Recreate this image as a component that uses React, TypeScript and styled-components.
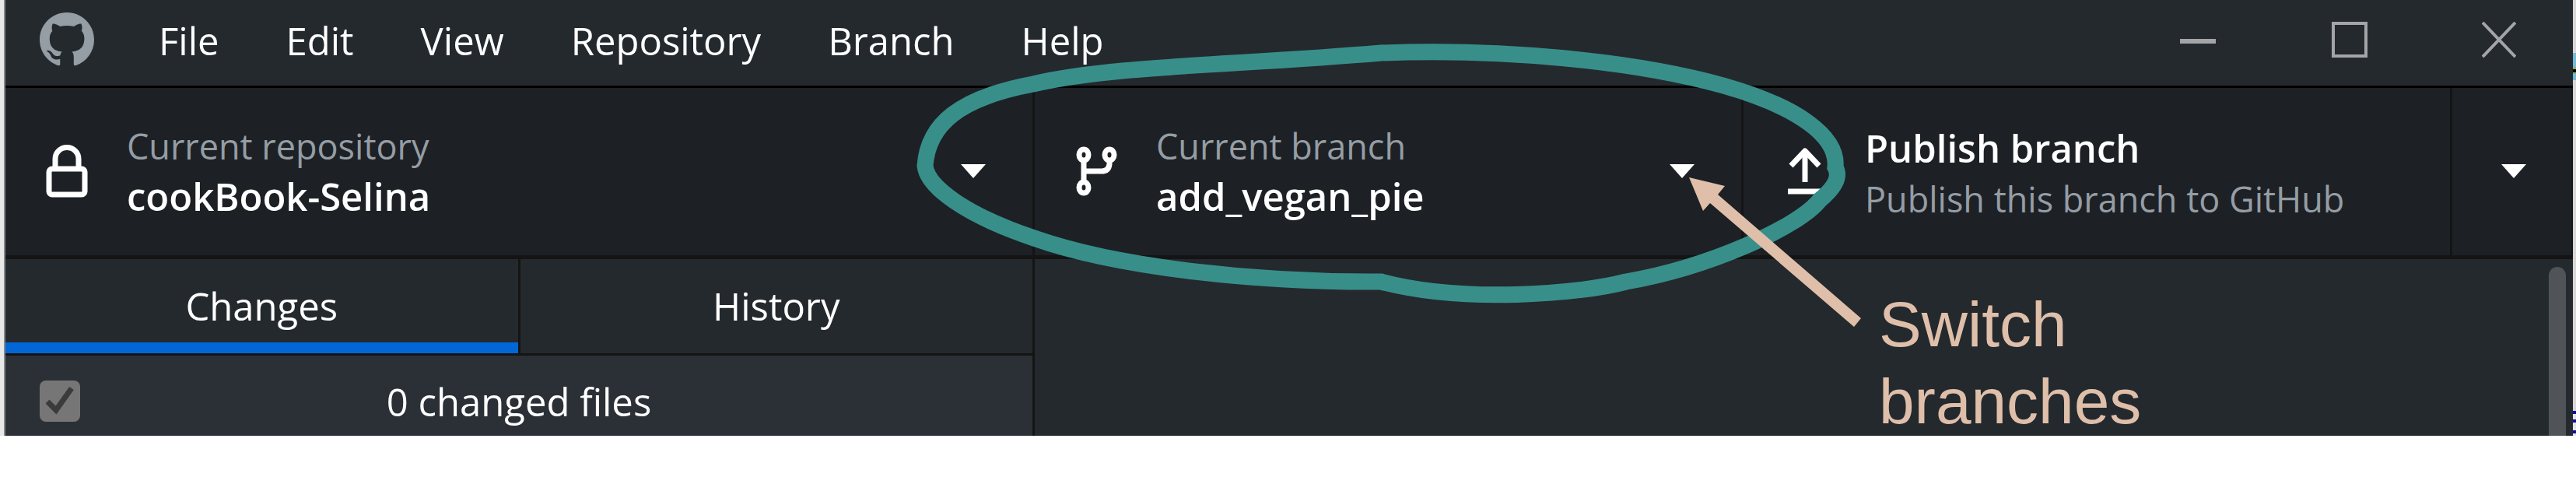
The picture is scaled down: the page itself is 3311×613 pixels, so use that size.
import React from "react";
import styled, { createGlobalStyle, css } from "styled-components";

const GlobalStyle = createGlobalStyle`
  *, *::before, *::after { box-sizing: border-box; }
  body {
    margin: 0;
    background: #ffffff;
    font-family: "Open Sans", "Noto Sans", sans-serif;
    color: #ffffff;
    overflow-x: hidden;
  }
  button, input { font: inherit; color: inherit; margin: 0; }
`;

const Stage = styled.div`
  position: relative;
  display: flex;
  background: #e8e8e8;
  padding-left: 5px;
`;

const Window = styled.main`
  flex: 1;
  min-width: 0;
  background: #24292e;
  border-left: 2px solid #85888a;
`;

/* Sliver of the desktop that shows beside the window */
const DesktopEdge = styled.div`
  flex: 0 0 4px;
  background: linear-gradient(
    #d8d6d7 68px,
    #74b9d6 68px 86px,
    #8fae6a 86px 89px,
    #000000 89px 93px,
    #8fae6a 93px 95px,
    #74b9d6 95px 103px,
    #d8d6d7 103px 528px,
    #10109a 528px 532px,
    #e6e4e0 532px 539px,
    #10109a 539px 543px,
    #e6e4e0 543px 553px,
    #10109a 553px 557px,
    #e6e4e0 557px
  );
`;

const TitleBar = styled.header`
  display: flex;
  align-items: center;
  height: 113px;
  padding: 0 0 8px 44px;
  border-bottom: 3px solid #000000;
`;

const Menu = styled.nav`
  display: flex;
  flex: 1;
  margin-left: 40px;
`;

const MenuItem = styled.button`
  padding: 2px 43px 0;
  border: 0;
  background: none;
  font-size: 49px;
  line-height: 68px;
`;

const WindowControls = styled.div`
  display: flex;
`;

const WindowButton = styled.button`
  display: grid;
  place-items: center;
  width: 195px;
  height: 102px;
  padding: 0;
  border: 0;
  background: none;
  color: #a3a5a7;

  &:last-child { width: 190px; }
`;

const Toolbar = styled.div`
  display: flex;
  height: 220px;
  background: #1d2125;
  border-bottom: 5px solid #141414;
`;

const ToolbarButton = styled.button<{ $width?: number }>`
  display: flex;
  align-items: center;
  ${({ $width }) =>
    $width
      ? css`flex: 0 0 ${$width}px;`
      : css`flex: 1; min-width: 0;`}
  padding: 0 60px 2px 44px;
  border: 0;
  border-right: 3px solid #141414;
  background: none;
  text-align: left;
`;

const MenuToggle = styled.button`
  display: grid;
  place-items: center;
  flex: 0 0 155px;
  padding: 0 0 2px 4px;
  border: 0;
  border-right: 2px solid #141414;
  background: none;
`;

const IconSlot = styled.span`
  display: grid;
  place-items: center;
  width: 70px;
  margin-right: 42px;
`;

const ButtonText = styled.span<{ $spaced?: boolean }>`
  display: flex;
  flex: 1;
  flex-direction: column;
  gap: ${({ $spaced }) => ($spaced ? 2 : 0)}px;
  padding-top: ${({ $spaced }) => ($spaced ? 6 : 0)}px;
  white-space: nowrap;
  line-height: 64px;
`;

const Description = styled.span`
  font-size: 45px;
  color: #959da5;
`;

const Title = styled.strong`
  font-size: 49px;
  font-weight: 600;
`;

const Body = styled.div`
  display: flex;
`;

const Sidebar = styled.section`
  flex: 0 0 1323px;
  border-right: 3px solid #141414;
`;

const Tabs = styled.div`
  display: flex;
  border-bottom: 3px solid #141414;
`;

const Tab = styled.button<{ $active?: boolean }>`
  flex: 1;
  height: 121px;
  padding: 0 0 2px;
  border: 0;
  background: none;
  box-shadow: ${({ $active }) => ($active ? "inset 0 -14px #0366d6" : "none")};
  font-size: 49px;
  line-height: 98px;

  & + & { border-left: 3px solid #141414; }
`;

const ChangesHeader = styled.div`
  display: grid;
  grid-template-columns: 1fr auto 1fr;
  align-items: center;
  height: 103px;
  padding: 14px 44px 0;
  background: #2b3036;
`;

const CheckAll = styled.input`
  appearance: none;
  width: 52px;
  height: 53px;
  border-radius: 8px;
  background: #767676;
  grid-area: 1 / 1;
`;

const CheckBoxWrap = styled.span`
  display: grid;
  justify-content: start;
  place-items: center;

  svg { grid-area: 1 / 1; pointer-events: none; }
`;

const FileCount = styled.label`
  font-size: 49px;
  line-height: 68px;
`;

const Content = styled.section`
  display: flex;
  flex: 1;
  justify-content: flex-end;
  padding: 10px 9px 0 0;
`;

const ScrollThumb = styled.div`
  width: 22px;
  border-radius: 11px 11px 0 0;
  background: #505357;
`;

const Annotation = styled.svg`
  position: absolute;
  top: 0;
  left: 0;
  overflow: visible;
  pointer-events: none;
`;

const Callout = styled.p`
  position: absolute;
  top: 367px;
  left: 2415px;
  width: 380px;
  margin: 0;
  color: #dfbfa9;
  font-family: "Liberation Sans", Arial, sans-serif;
  font-size: 82px;
  line-height: 99px;
`;

const Caret = () => (
  <svg width="32" height="18" viewBox="0 0 32 18" aria-hidden="true">
    <path d="M0 0h32L16 18z" fill="#fff" />
  </svg>
);

const GitHubMark = () => (
  <svg width="70" height="70" viewBox="0 0 16 16" fill="#959da5" aria-label="GitHub">
    <path d="M8 0C3.58 0 0 3.58 0 8c0 3.54 2.29 6.53 5.47 7.59.4.07.55-.17.55-.38 0-.19-.01-.82-.01-1.49-2.01.37-2.53-.49-2.69-.94-.09-.23-.48-.94-.82-1.13-.28-.15-.68-.52-.01-.53.63-.01 1.08.58 1.23.82.72 1.21 1.87.87 2.33.66.07-.52.28-.87.51-1.07-1.78-.2-3.64-.89-3.64-3.95 0-.87.31-1.59.82-2.15-.08-.2-.36-1.02.08-2.12 0 0 .67-.21 2.2.82.64-.18 1.32-.27 2-.27s1.36.09 2 .27c1.53-1.04 2.2-.82 2.2-.82.44 1.1.16 1.92.08 2.12.51.56.82 1.27.82 2.15 0 3.07-1.87 3.75-3.65 3.95.29.25.54.73.54 1.48 0 1.07-.01 1.93-.01 2.2 0 .21.15.46.55.38A8.01 8.01 0 0 0 16 8c0-4.42-3.58-8-8-8z" />
  </svg>
);

const LockIcon = () => (
  <svg width="54" height="68" viewBox="0 0 54 68" fill="none" stroke="#fff" strokeWidth="7" aria-hidden="true">
    <rect x="4" y="31" width="46" height="33" rx="4" />
    <path d="M12 31V18a15 14.5 0 0 1 30 0v13" />
  </svg>
);

const BranchIcon = () => (
  <svg width="54" height="64" viewBox="0 0 54 64" fill="none" stroke="#fff" strokeWidth="7" aria-hidden="true">
    <ellipse cx="11" cy="11" rx="6" ry="7" />
    <ellipse cx="44" cy="11" rx="6" ry="7" />
    <ellipse cx="11" cy="53" rx="6" ry="7" />
    <path d="M11 18v28M11 32h23q9 0 10-9v-5" />
  </svg>
);

const PublishIcon = () => (
  <svg width="44" height="62" viewBox="0 0 44 62" fill="none" stroke="#fff" strokeWidth="7" aria-hidden="true">
    <path d="M22 7v38" />
    <path d="M4 24L22 5l18 19" strokeLinejoin="round" />
    <path d="M0 57h44" />
  </svg>
);

export default function App() {
  return (
    <>
      <GlobalStyle />
      <Stage>
        <Window>
          <TitleBar>
            <GitHubMark />
            <Menu>
              {["File", "Edit", "View", "Repository", "Branch", "Help"].map((name) => (
                <MenuItem key={name} type="button">{name}</MenuItem>
              ))}
            </Menu>
            <WindowControls>
              <WindowButton type="button" aria-label="Minimize">
                <svg width="46" height="46"><path d="M0 25h46" stroke="currentColor" strokeWidth="6" /></svg>
              </WindowButton>
              <WindowButton type="button" aria-label="Maximize">
                <svg width="46" height="46"><path d="M2 2h42v42H2z" fill="none" stroke="currentColor" strokeWidth="4" /></svg>
              </WindowButton>
              <WindowButton type="button" aria-label="Close">
                <svg width="44" height="46"><path d="M1 1l42 44M43 1L1 45" stroke="currentColor" strokeWidth="4" /></svg>
              </WindowButton>
            </WindowControls>
          </TitleBar>

          <Toolbar>
            <ToolbarButton type="button" $width={1323}>
              <IconSlot><LockIcon /></IconSlot>
              <ButtonText>
                <Description>Current repository</Description>
                <Title>cookBook-Selina</Title>
              </ButtonText>
              <Caret />
            </ToolbarButton>
            <ToolbarButton type="button" $width={911}>
              <IconSlot><BranchIcon /></IconSlot>
              <ButtonText>
                <Description>Current branch</Description>
                <Title>add_vegan_pie</Title>
              </ButtonText>
              <Caret />
            </ToolbarButton>
            <ToolbarButton type="button">
              <IconSlot><PublishIcon /></IconSlot>
              <ButtonText $spaced>
                <Title>Publish branch</Title>
                <Description>Publish this branch to GitHub</Description>
              </ButtonText>
            </ToolbarButton>
            <MenuToggle type="button" aria-label="Publish options"><Caret /></MenuToggle>
          </Toolbar>

          <Body>
            <Sidebar>
              <Tabs role="tablist">
                <Tab type="button" role="tab" aria-selected="true" $active>Changes</Tab>
                <Tab type="button" role="tab" aria-selected="false">History</Tab>
              </Tabs>
              <ChangesHeader>
                <CheckBoxWrap>
                  <CheckAll id="check-all" type="checkbox" defaultChecked />
                  <svg width="52" height="53" viewBox="0 0 52 53" fill="none" stroke="#3b3b3b" strokeWidth="7" aria-hidden="true">
                    <path d="M10 27l11 11L41 10" />
                  </svg>
                </CheckBoxWrap>
                <FileCount htmlFor="check-all">0 changed files</FileCount>
              </ChangesHeader>
            </Sidebar>
            <Content>
              <ScrollThumb />
            </Content>
          </Body>
        </Window>
        <DesktopEdge />

        <Annotation width="2500" height="560" viewBox="0 0 2500 560" aria-hidden="true">
          <path
            d="M1775 68C1930 62 2100 78 2215 110C2310 137 2363 175 2359 215C2365 226 2361 239 2339 257C2312 292 2195 344 2090 362C2030 378 1880 390 1775 362C1620 363 1440 345 1329 306C1240 276 1192 240 1189 213C1193 160 1232 126 1328 108C1430 84 1590 84 1775 68Z"
            fill="none"
            stroke="#388f8a"
            strokeWidth="21"
          />
          <path d="M2171 228L2217 239L2208 250L2392 409L2383 420L2198 261L2189 271Z" fill="#dfbfa9" />
        </Annotation>
        <Callout>Switch branches</Callout>
      </Stage>
    </>
  );
}
